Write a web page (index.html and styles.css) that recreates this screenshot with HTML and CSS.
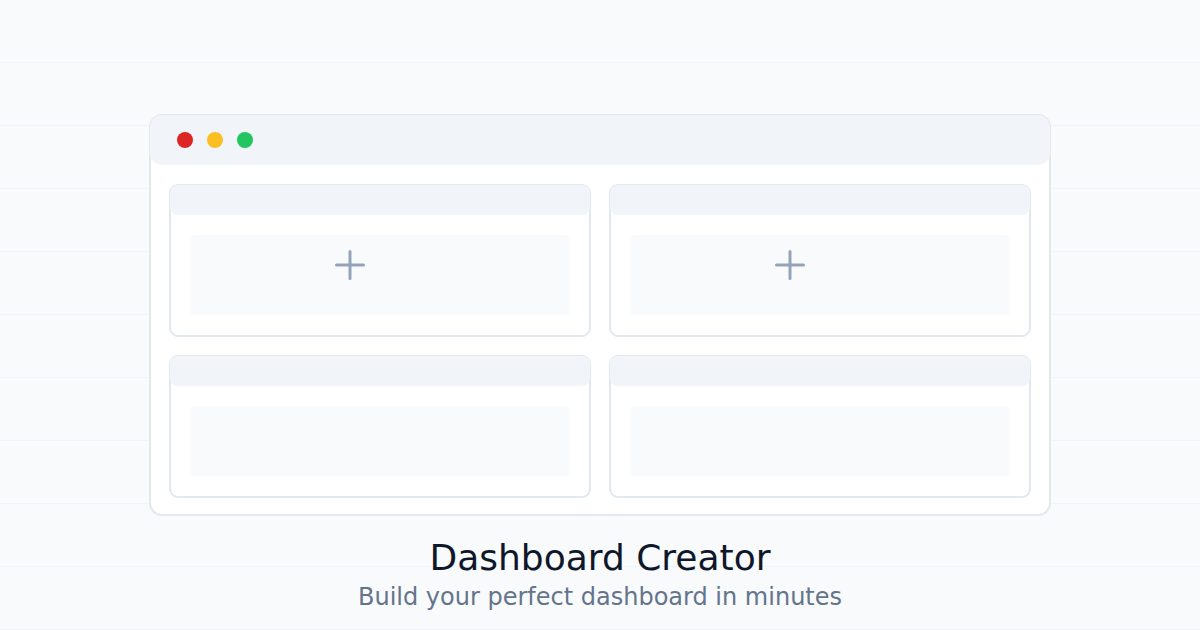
FILE: index.html
```html
<!DOCTYPE html>
<html>
<head>
<meta charset="utf-8">
<link rel="stylesheet" href="styles.css">
</head>
<body>
<div class="page">
  <div class="window">
    <div class="win-header">
      <span class="dot red"></span>
      <span class="dot yellow"></span>
      <span class="dot green"></span>
    </div>
    <div class="grid">
      <div class="panel">
        <div class="panel-header"></div>
        <div class="panel-body tall">
          <svg class="plus" width="30" height="30" viewBox="0 0 30 30"><path d="M15 1.5V28.5M1.5 15H28.5" stroke="#94a3b8" stroke-width="3" stroke-linecap="round" fill="none"/></svg>
        </div>
      </div>
      <div class="panel">
        <div class="panel-header"></div>
        <div class="panel-body tall">
          <svg class="plus" width="30" height="30" viewBox="0 0 30 30"><path d="M15 1.5V28.5M1.5 15H28.5" stroke="#94a3b8" stroke-width="3" stroke-linecap="round" fill="none"/></svg>
        </div>
      </div>
      <div class="panel">
        <div class="panel-header"></div>
        <div class="panel-body short"></div>
      </div>
      <div class="panel">
        <div class="panel-header"></div>
        <div class="panel-body short"></div>
      </div>
    </div>
  </div>
  <h1 class="title">Dashboard Creator</h1>
  <p class="subtitle">Build your perfect dashboard in minutes</p>
</div>
</body>
</html>
```

FILE: styles.css
```css
html, body {
  margin: 0;
  padding: 0;
}
body {
  width: 1200px;
  height: 630px;
  overflow: hidden;
  background-color: #f8fafc;
  background-image: repeating-linear-gradient(to bottom, transparent 0, transparent 62.5px, #f1f5f9 62.5px, #f1f5f9 63.5px, transparent 63.5px, transparent 126px);
  background-size: 100% 63px;
  background-repeat: repeat-y;
  background-position: 0 0;
  font-family: "DejaVu Sans", sans-serif;
}
.page {
  display: flex;
  flex-direction: column;
  align-items: center;
  padding-top: 114px;
}
.window {
  box-sizing: border-box;
  width: 902px;
  height: 402px;
  border: 2px solid #e2e8f0;
  border-radius: 13px;
  background: #ffffff;
}
.win-header {
  margin: -1px -1px 0;
  height: 50px;
  border-radius: 12px;
  background: #f1f5f9;
  display: flex;
  align-items: center;
  padding-left: 27px;
  gap: 14px;
}
.dot {
  width: 16px;
  height: 16px;
  border-radius: 50%;
}
.red { background: #dc2626; }
.yellow { background: #fbbf24; }
.green { background: #22c55e; }
.grid {
  display: grid;
  grid-template-columns: 422px 422px;
  gap: 18px;
  padding: 19px 18px 0;
}
.panel {
  box-sizing: border-box;
  border: 2px solid #e2e8f0;
  border-radius: 9px;
  background: #ffffff;
}
.panel-header {
  margin: -1px -1px 0;
  height: 30px;
  border-radius: 8px;
  background: #f1f5f9;
}
.panel-body {
  box-sizing: border-box;
  width: 380px;
  margin: 20px 0 20px 19px;
  border-radius: 4px;
  background: #f8fafc;
}
.tall {
  height: 80px;
  padding: 15px 0 0 145px;
}
.short {
  height: 70px;
}
.plus {
  display: block;
}
.title {
  margin: 20px 0 0;
  font-size: 36px;
  font-weight: normal;
  line-height: 44px;
  color: #0f172a;
}
.subtitle {
  margin: 2px 0 0;
  font-size: 24px;
  line-height: 30px;
  color: #64748b;
}
```
